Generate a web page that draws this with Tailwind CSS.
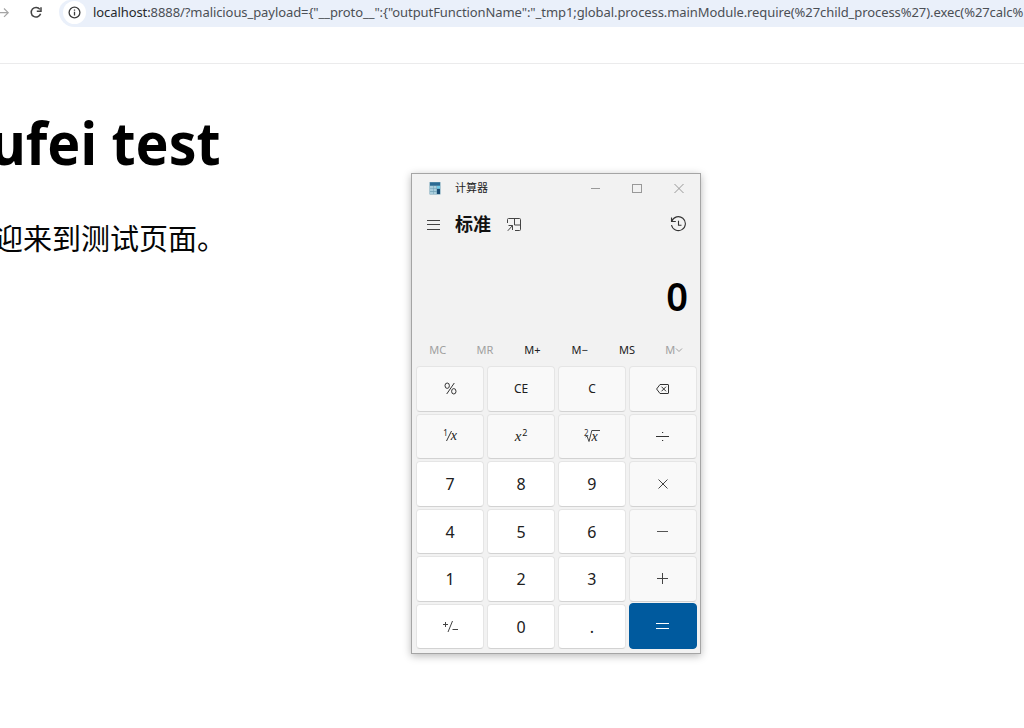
<!DOCTYPE html>
<html lang="zh-CN">
<head>
<meta charset="utf-8">
<title>test</title>
<script src="https://cdn.jsdelivr.net/npm/@tailwindcss/browser@4"></script>
</head>
<body class="relative h-[728px] w-[1024px] overflow-hidden bg-white font-['Noto_Sans','Noto_Sans_CJK_SC',sans-serif] text-black">
<header class="flex h-16 items-start overflow-hidden border-b border-[#ebebec]">
  <div class="flex h-[26px] w-[59px] shrink-0 items-center">
    <svg class="h-[26px] w-[59px]" viewBox="0 0 59 26" fill="none">
      <path d="M0 12.7H8M4 8.5l4.2 4.2L4 16.9" stroke="#a5a5a5" stroke-width="1.2"/>
      <path d="M39.9 9.4A4.8 4.8 0 1 0 40.6 13.8" stroke="#444" stroke-width="1.5"/>
      <path d="M41 7.3V11.3H36.8" stroke="#444" stroke-width="1.5"/>
    </svg>
  </div>
  <div class="flex h-[27px] flex-1 items-center overflow-hidden rounded-bl-[16px] rounded-tl-[12px] bg-[#eaf0fa] pl-1">
    <div class="mb-[3px] flex h-[23px] w-[23px] shrink-0 items-center justify-center rounded-full bg-white">
      <svg class="h-[13px] w-[13px]" viewBox="0 0 13 13" fill="none" stroke="#3c3c3c" stroke-width="1.3"><circle cx="6.5" cy="6.5" r="5.4"/><path d="M6.5 5.8v3.6M6.5 3.5v1.3"/></svg>
    </div>
    <div class="mb-[4px] ml-[7px] whitespace-nowrap text-[13px] leading-[18px] tracking-[-0.08px] text-[#4b4f55]"><span class="text-[#25282c]">localhost:</span>8888/?malicious_payload={"__proto__":{"outputFunctionName":"_tmp1;global.process.mainModule.require(%27child_process%27).exec(%27calc%</div>
  </div>
</header>
<main class="flex w-[226px] flex-col items-end overflow-hidden">
  <h1 class="mr-[5px] mt-[38px] origin-right scale-x-[0.925] whitespace-nowrap text-[60px] font-bold leading-[80px]">ufei test</h1>
  <p class="mt-[35px] whitespace-nowrap font-['Noto_Sans_CJK_SC',sans-serif] text-[29px] leading-[40px] text-[#050505]">迎来到测试页面。</p>
</main>

<section class="absolute left-[411px] top-[173px] flex h-[481px] w-[290px] flex-col border border-[#a5a5a5] bg-[#f2f2f2] px-1 text-[#202020] shadow-[0_2px_8px_rgba(0,0,0,0.28)]">
  <div class="mb-px flex h-[28px] items-center pl-[13px]">
    <svg class="h-[14px] w-[12px]" viewBox="0 0 12 14"><rect x=".5" y="1" width="11" height="12.5" rx=".5" fill="#6f9fb5"/><rect x="1" y="1.500" width="10" height="3" fill="#2b6a94"/><path d="M1 5h3v2.500H1zM4.500 5h3v2.500h-3zM1 8h3v2.300H1zM4.500 8h3v2.300h-3zM1 11h3v2H1zM4.500 11h3v2h-3z" fill="#a9cedd"/><path d="M8 5h3v2.500H8z" fill="#6fcbe8"/><path d="M8 8h3v5H8z" fill="#174a72"/></svg>
    <span class="ml-[14px] text-[11px] leading-4 text-[#222]">计算器</span>
    <svg class="ml-auto mr-[10px] h-[12px] w-[96px]" viewBox="0 0 96 12" fill="none" stroke="#999"><path d="M1 6.500h9"/><rect x="42.500" y="2.500" width="9" height="8"/><path d="M84.500 2l9 9m0-9l-9 9"/></svg>
  </div>
  <div class="flex h-[42px] items-center pl-[11px]">
    <svg class="h-[13px] w-[13px]" viewBox="0 0 13 13" fill="none" stroke="#444"><path d="M0 2.500h13M0 6.500h13M0 11.500h13"/></svg>
    <span class="ml-[15px] text-[18px] font-bold leading-6 text-[#111]">标准</span>
    <svg class="ml-[16px] mt-px h-[14px] w-[14px]" viewBox="0 0 14 14" fill="none" stroke="#444"><path d="M.5 5V1.500q0-1 1-1H12.500q1 0 1 1v10q0 1-1 1H8M7.500.500v6.500h6M5.500 7.500L.8 12.800M1.500 7.500h4V12"/></svg>
    <svg class="ml-auto mr-[9px] h-[17px] w-[17px]" viewBox="0 0 17 17" fill="none" stroke="#333" stroke-width="1.1"><path d="M1.500 1.500V5.500H5.800M1.800 5.200A7 7 0 1 1 1.500 9M8.500 4.800v4.500h3"/></svg>
  </div>
  <div class="flex h-[90px] items-center justify-end pr-[8px] pt-[12px] text-[40px] font-semibold leading-[50px] text-black"><span class="origin-right scale-x-95">0</span></div>
  <div class="-mx-[2px] grid h-[30px] grid-cols-6 items-center text-center text-[11px] leading-4">
    <span class="text-[#a0a0a0]">MC</span><span class="text-[#a0a0a0]">MR</span><span>M+</span><span>M−</span><span>MS</span>
    <span class="flex items-center justify-center text-[#a0a0a0]">M<svg class="h-2 w-2" viewBox="0 0 8 8" fill="none" stroke="#a0a0a0"><path d="M1 2.500l3 3 3-3"/></svg></span>
  </div>
  <div class="-mr-px mt-px grid h-[283px] shrink-0 grid-cols-4 grid-rows-6 gap-x-[2.5px] gap-y-[2px] text-[16px] leading-6 *:flex *:items-center *:justify-center *:rounded-[4px] *:border *:border-[#e5e5e5] *:border-b-[#d2d2d2]">
    <div class="bg-[#f9f9f9]"><svg class="h-[13px] w-[13px]" viewBox="0 0 13 13" fill="none" stroke="#333"><ellipse cx="3.200" cy="3.700" rx="2.200" ry="2.700"/><ellipse cx="9.800" cy="9.300" rx="2.200" ry="2.700"/><path d="M10.300 1L2.700 12"/></svg></div>
    <div class="bg-[#f9f9f9] pt-px text-[12px]">CE</div>
    <div class="bg-[#f9f9f9] pt-px text-[12px]">C</div>
    <div class="bg-[#f9f9f9]"><svg class="h-[10px] w-[13px]" viewBox="0 0 13 10" fill="none" stroke="#333"><path d="M4 .5h8q.5 0 .5.500v8q0 .5-.5.500H4L.6 5zM5.500 2.700l4.500 4.600m0-4.600L5.500 7.300"/></svg></div>
    <div class="bg-[#f9f9f9]"><span class="flex items-center font-['Liberation_Serif',serif] text-[14px] italic"><span class="mb-[6px] font-['Noto_Sans',sans-serif] text-[8px] not-italic">1</span><svg class="-ml-[2px] h-3 w-[6px]" viewBox="0 0 6 12" stroke="#333"><path d="M.5 11L5.500 1"/></svg><span class="-ml-px">x</span></span></div>
    <div class="bg-[#f9f9f9]"><span class="flex items-center font-['Liberation_Serif',serif] text-[15px] italic">x<span class="mb-[6px] ml-px font-['Noto_Sans',sans-serif] text-[9px] not-italic">2</span></span></div>
    <div class="bg-[#f9f9f9]"><svg class="h-[16px] w-[18px]" viewBox="0 0 18 16" fill="none" stroke="#333" stroke-width=".9"><path d="M2.500 9l1.500-1 2 5.500L8.800 2.500H17"/><text x="1" y="7.500" font-size="8" font-family="Noto Sans" fill="#333" stroke="none">2</text><text x="8.500" y="12.500" font-size="14" font-style="italic" font-family="Liberation Serif" fill="#222" stroke="none">x</text></svg></div>
    <div class="bg-[#f9f9f9]"><svg class="h-[13px] w-[13px]" viewBox="0 0 13 13" stroke="#333"><path d="M0 6.500h13M6 2.500h1.200M6 10.500h1.200"/></svg></div>
    <div class="bg-white pt-px">7</div><div class="bg-white pt-px">8</div><div class="bg-white pt-px">9</div>
    <div class="bg-[#f9f9f9]"><svg class="h-[10px] w-[10px]" viewBox="0 0 10 10" stroke="#444"><path d="M.5.500l9 9m0-9l-9 9"/></svg></div>
    <div class="bg-white pt-px">4</div><div class="bg-white pt-px">5</div><div class="bg-white pt-px">6</div>
    <div class="bg-[#f9f9f9]"><svg class="h-[11px] w-[11px]" viewBox="0 0 11 11" stroke="#555"><path d="M0 5.500h11"/></svg></div>
    <div class="bg-white pt-px">1</div><div class="bg-white pt-px">2</div><div class="bg-white pt-px">3</div>
    <div class="bg-[#f9f9f9]"><svg class="h-[11px] w-[11px]" viewBox="0 0 11 11" stroke="#444"><path d="M0 5.500h11M5.500 0v11"/></svg></div>
    <div class="bg-white"><svg class="h-[13px] w-[15px]" viewBox="0 0 15 13" fill="none" stroke="#444"><path d="M0 4.500h5M2.500 2v5M5 12L9.500 1M9.500 9.500H15"/></svg></div>
    <div class="bg-white pt-px">0</div><div class="bg-white pt-px">.</div>
    <div class="-mt-px border-[#005a9e]! bg-[#005a9e]"><svg class="h-[8px] w-[13px]" viewBox="0 0 13 8" stroke="#fff"><path d="M0 1.500h13M0 6.500h13"/></svg></div>
  </div>
</section>
</body>
</html>
